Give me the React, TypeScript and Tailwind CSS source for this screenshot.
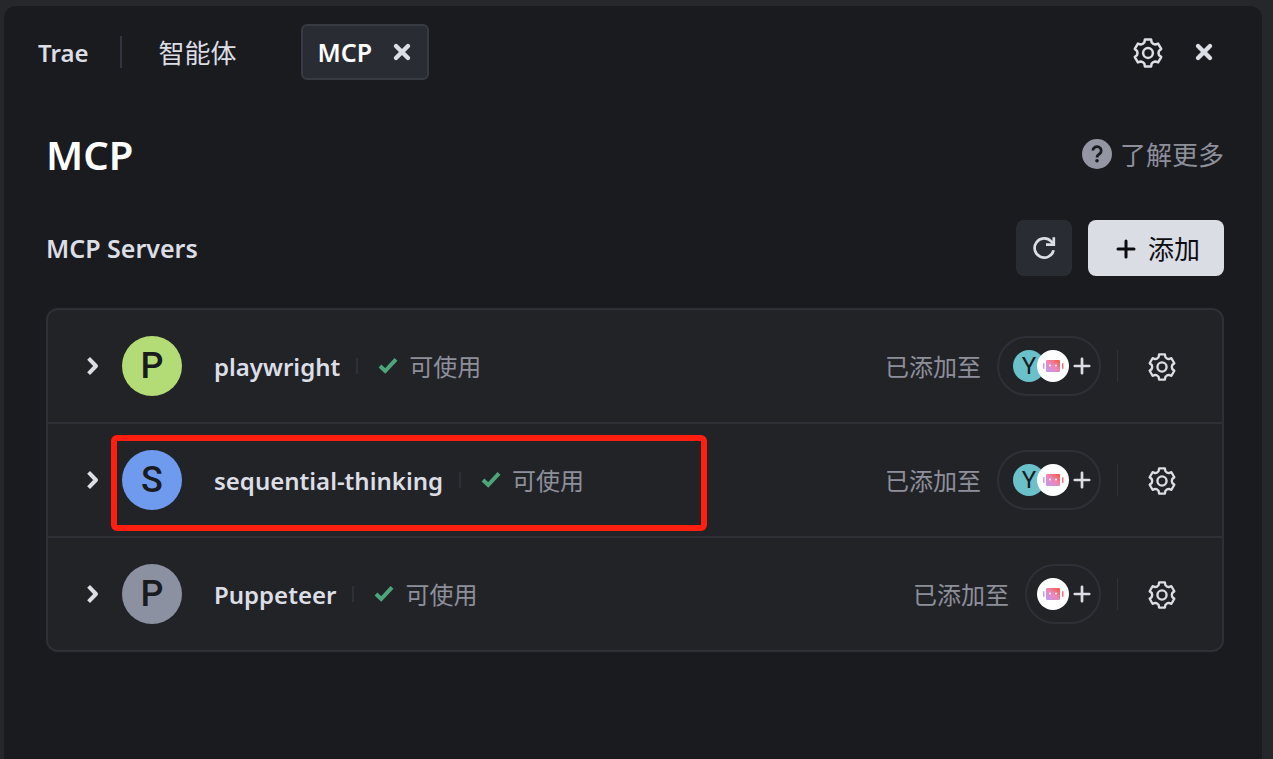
interface Server {
  name: string;
  letter: string;
  color: string;
  agents: string[];
  marked?: boolean;
}

const servers: Server[] = [
  { name: 'playwright', letter: 'P', color: 'bg-[#b4dc76]', agents: ['Y', 'bot'] },
  { name: 'sequential-thinking', letter: 'S', color: 'bg-[#6f9bee]', agents: ['Y', 'bot'], marked: true },
  { name: 'Puppeteer', letter: 'P', color: 'bg-[#8c91a1]', agents: ['bot'] },
];

// Six teeth: [angle offset, radius] for the tooth corners and the notch corners
const toothProfile = [[-13, 13.8], [13, 13.8], [19, 11.2], [30, 10.5], [41, 11.2]];
const gearPoints = Array.from({ length: 6 }, (_, i) =>
  toothProfile.map(([offset, r]) => {
    const angle = ((i * 60 - 90 + offset) * Math.PI) / 180;
    return `${(15 + r * Math.cos(angle)).toFixed(2)},${(15 + r * Math.sin(angle)).toFixed(2)}`;
  }).join(' ')
).join(' ');

const GearIcon = ({ size }: { size: number }) => (
  <svg width={size} height={size} viewBox="0 0 30 30" fill="none" stroke="currentColor" strokeWidth="2.5" strokeLinejoin="round">
    <polygon points={gearPoints} />
    <circle cx="15" cy="15" r="4.9" />
  </svg>
);

const CloseIcon = () => (
  <svg width="20" height="20" viewBox="0 0 20 20" fill="none" stroke="currentColor" strokeWidth="4.4" strokeLinecap="round">
    <path d="M4 4l12 12M16 4L4 16" />
  </svg>
);

const PlusIcon = ({ size }: { size: number }) => (
  <svg width={size} height={size} viewBox="0 0 20 20" fill="none" stroke="currentColor" strokeWidth="3" strokeLinecap="round">
    <path d="M10 2v16M2 10h16" />
  </svg>
);

const RefreshIcon = () => (
  <svg width="24" height="24" viewBox="0 0 24 24" fill="none" stroke="currentColor" strokeWidth="2.7">
    <path d="M21.6 14.2A9.6 9.6 0 1 1 19.2 5.4L21 7.4" />
    <path d="M21.8 1.2V8.6H14" />
  </svg>
);

const HelpIcon = () => (
  <svg width="30" height="30" viewBox="0 0 30 30" fill="none">
    <circle cx="15" cy="15" r="15" fill="#9496a3" />
    <path d="M10.8 11.6a4.2 4 0 1 1 6.8 3.2c-1.6 1.1-2.6 1.7-2.6 3.6" stroke="#1a1b1f" strokeWidth="2.8" />
    <circle cx="15" cy="21.8" r="1.8" fill="#1a1b1f" />
  </svg>
);

const ChevronIcon = () => (
  <svg width="12" height="20" viewBox="0 0 12 20" fill="none" stroke="currentColor" strokeWidth="4">
    <path d="M1.6 2.4L9 10l-7.4 7.6" strokeLinejoin="round" />
  </svg>
);

const CheckIcon = () => (
  <svg width="20" height="18" viewBox="0 0 20 18" fill="none" stroke="#4da57b" strokeWidth="4">
    <path d="M2 9l5.2 5L18 2.4" />
  </svg>
);

const BotIcon = () => (
  <svg width="32" height="32" viewBox="0 0 32 32">
    <defs>
      <linearGradient id="bot" x1="0" y1="1" x2="1" y2="0">
        <stop offset="0" stopColor="#b79cf8" />
        <stop offset="0.5" stopColor="#ef86b8" />
        <stop offset="1" stopColor="#f0583a" />
      </linearGradient>
    </defs>
    <circle cx="16" cy="16" r="16" fill="#fff" />
    <rect x="9" y="10" width="14" height="12" rx="1" fill="url(#bot)" />
    <rect x="6" y="13" width="1.5" height="6" rx="0.7" fill="#c79cf0" />
    <rect x="25" y="13" width="1.5" height="6" rx="0.7" fill="#f2707a" />
    <circle cx="13" cy="15.4" r="1" fill="#fff" />
    <circle cx="19" cy="15.4" r="1" fill="#fff" />
  </svg>
);

const ServerRow = ({ server }: { server: Server }) => (
  <li className="relative flex items-center py-[26px] pr-[46px] pl-[39px]">
    <button aria-label="展开" className="flex w-[35px] text-[#dcdee6]">
      <ChevronIcon />
    </button>
    <div className={`flex size-[60px] items-center justify-center rounded-full font-['Roboto'] text-4xl font-medium text-[#1a1b1f] ${server.color}`}>
      {server.letter}
    </div>
    <span className="ml-8 pt-0.5 text-2xl font-semibold text-[#dcdee6]">{server.name}</span>
    <span className="mx-4 h-4 w-0.5 bg-[#2e3037]" />
    <span className="flex items-center gap-[11px] pl-1 text-2xl text-[#8d8f9b]">
      <CheckIcon />
      <span className="pt-0.5">可使用</span>
    </span>

    <span className="ml-auto pt-0.5 text-2xl text-[#8d8f9b]">已添加至</span>
    <button
      aria-label="添加到智能体"
      className={`ml-4 flex h-[60px] items-center rounded-full border-2 border-[#2e3037] pr-2 text-[#dcdee6] ${
        server.agents.length > 1 ? 'pl-3.5' : 'pl-2.5'
      }`}
    >
      <span className="flex -space-x-2">
        {server.agents.map((agent) =>
          agent === 'bot' ? (
            <span key={agent} className="relative"><BotIcon /></span>
          ) : (
            <span key={agent} className="flex size-8 items-center justify-center rounded-full bg-[#6ac1ca] font-['Roboto'] text-2xl text-[#1a1b1f]">
              {agent}
            </span>
          )
        )}
      </span>
      <span className="ml-1">
        <PlusIcon size={18} />
      </span>
    </button>
    <span className="ml-4 h-8 w-px bg-[#2e3037]" />
    <button aria-label="设置" className="ml-[30px] flex pt-0.5 text-[#dcdee6]">
      <GearIcon size={28} />
    </button>

    {/* highlight frame around the new server */}
    {server.marked && (
      <div className="pointer-events-none absolute top-[11px] left-[63px] h-24 w-[596px] rounded-md border-6 border-[#ff1e10]" />
    )}
  </li>
);

export default function App() {
  return (
    <div className="flex min-h-screen bg-[#26272b] pt-1.5 pr-[11px] pl-1 font-['Noto_Sans','Noto_Sans_CJK_SC',sans-serif]">
      <div className="flex-1 rounded-t-xl bg-[#1a1b1f]">
        <header className="flex h-[92px] items-center pr-12 pl-[34px] text-[26px] text-[#dcdee6]">
          <button className="pt-0.5 text-2xl font-semibold">Trae</button>
          <span className="mr-9 ml-8 h-8 w-0.5 bg-[#32353d]" />
          <button className="pt-0.5">智能体</button>
          <div className="ml-16 flex h-14 items-center gap-5 rounded-md border-2 border-[#363a43] bg-[#2a2c33] px-[15px]">
            <span className="pt-0.5 text-[25px] font-semibold text-white">MCP</span>
            <button aria-label="关闭标签" className="flex">
              <CloseIcon />
            </button>
          </div>
          <button aria-label="设置" className="ml-auto flex pt-0.5">
            <GearIcon size={30} />
          </button>
          <button aria-label="关闭" className="ml-[31px] flex">
            <CloseIcon />
          </button>
        </header>

        <main className="pr-[38px] pl-[42px]">
          <div className="flex h-28 items-center justify-between">
            <h1 className="pt-0.5 text-[40px] font-semibold text-white">MCP</h1>
            <a href="#" className="flex items-center gap-2 text-[26px] text-[#8d8f9b]">
              <HelpIcon />
              <span className="pt-0.5">了解更多</span>
            </a>
          </div>

          <div className="mt-2.5 flex items-center gap-4">
            <h2 className="mr-auto pt-0.5 text-[25px] font-semibold text-[#dcdee6]">MCP Servers</h2>
            <button aria-label="刷新" className="flex size-14 items-center justify-center rounded-lg bg-[#2a2c33] text-[#dcdee6]">
              <RefreshIcon />
            </button>
            <button className="flex h-14 items-center gap-3 rounded-lg bg-[#dbdde4] pt-0.5 pr-6 pl-7 text-[26px] text-[#0c0d10]">
              <PlusIcon size={20} />
              添加
            </button>
          </div>

          <ul className="mt-8 divide-y-2 divide-[#2e3037] rounded-xl border-2 border-[#2e3037] bg-[#222327]">
            {servers.map((server) => (
              <ServerRow key={server.name} server={server} />
            ))}
          </ul>
        </main>
      </div>
    </div>
  );
}
